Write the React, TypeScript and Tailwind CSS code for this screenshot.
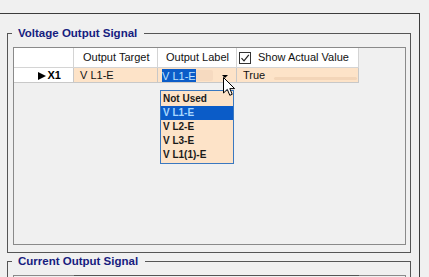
import React from 'react';

const PEACH = 'bg-[#fde3c8]';

const LIST_ITEMS = ['Not Used', 'V L1-E', 'V L2-E', 'V L3-E', 'V L1(1)-E'];

function GroupBox({ title, className, children }: { title: string; className?: string; children: React.ReactNode }) {
  return (
    <div className={`relative w-[404px] border border-[#555555] ${className ?? ''}`}>
      {/* legend sits over the top border */}
      <span className="absolute left-[4px] top-[-8px] pl-[6px] pr-[7px] bg-[#f0f0f0] text-[11.5px] leading-[14px] font-bold text-[#16207f]">
        {title}
      </span>
      {children}
    </div>
  );
}

function Cursor() {
  return (
    <svg width="13" height="20" viewBox="0 0 13 20" className="block">
      <path
        d="M0.5 0.5 L0.5 16 L4.3 12.4 L6.8 18.3 L9.2 17.3 L6.8 11.6 L11.6 11.6 Z"
        fill="#ffffff"
        stroke="#000000"
        strokeWidth="1"
        strokeLinejoin="round"
      />
    </svg>
  );
}

export default function App() {
  return (
    <div className="w-[429px] h-[277px] overflow-hidden bg-[#f0f0f0] font-['Liberation_Sans',Arial,sans-serif] text-[11px] text-[#111]">
      <div className="pt-[13px]">
        <div className="w-[420px] h-[264px] border-t border-r border-[#3c3c3c] pt-[19px] pl-[7px]">
          <GroupBox title="Voltage Output Signal" className="h-[220px]">
            <div className="relative mt-[13px] ml-[5px] w-[393px] h-[198px] border border-[#8a8a8a]">
              {/* header row */}
              <div className="flex h-[20px]">
                <div className="w-[60px] bg-white border-r border-b border-[#d4d4d4]" />
                <div className="w-[84px] bg-white border-r border-b border-[#d4d4d4] flex items-center pl-[9px]">
                  Output Target
                </div>
                <div className="w-[79px] bg-white border-r border-b border-[#d4d4d4] flex items-center pl-[8px]">
                  Output Label
                </div>
                <div className="w-[122px] bg-white border-r border-b border-[#d4d4d4] flex items-center pl-[2px]">
                  <span className="w-[12px] h-[12px] border border-[#333] bg-white flex items-center justify-center">
                    <svg width="10" height="10" viewBox="0 0 10 10">
                      <path d="M1.5 5.2 L4 7.8 L8.8 1.8" fill="none" stroke="#222" strokeWidth="1.2" />
                    </svg>
                  </span>
                  <span className="ml-[7px]">Show Actual Value</span>
                </div>
              </div>

              {/* data row */}
              <div className="flex h-[15px]">
                <div className="w-[60px] bg-white border-r border-b border-[#c8c8c8] flex items-center justify-end pr-[12px] pt-[1px] gap-[2px]">
                  <span className="w-0 h-0 border-l-[8px] border-l-black border-y-[4px] border-y-transparent" />
                  <span className="font-bold text-black">X1</span>
                </div>
                <div className={`w-[84px] ${PEACH} border-r border-b border-[#c8c8c8] flex items-center pl-[6px] pt-[1px]`}>
                  V L1-E
                </div>
                <div className={`w-[79px] ${PEACH} border-r border-b border-[#c8c8c8] flex items-center pl-[4px]`}>
                  <span className="h-[13px] leading-[13px] bg-[#0b5cc8] text-[#bfe2ff] pt-[1px]">V L1-E</span>
                  <span className="w-[17px] h-[11px] bg-[#f6dac0] rounded-[2px]" />
                  <span className="ml-auto mr-[8px] mt-[3px] w-0 h-0 border-t-[3px] border-t-black border-x-[3px] border-x-transparent" />
                </div>
                <div className={`w-[122px] ${PEACH} border-r border-b border-[#c8c8c8] flex items-center pl-[6px] pt-[1px]`}>
                  <span>True</span>
                  <span className="ml-[9px] mr-[1px] flex-1 h-[3px] mt-[6px] rounded-full bg-[#f3d5b8]" />
                </div>
              </div>

              {/* open dropdown list */}
              <div className="absolute left-[146px] top-[42px] w-[74px] border border-[#3a78c0] bg-[#fde3c8] pt-[1px] pb-[1px]">
                {LIST_ITEMS.map((item, i) => (
                  <div
                    key={item}
                    className={`h-[14px] leading-[14px] pl-[2px] text-[10px] font-bold ${
                      i === 1 ? 'bg-[#0b5cc8] text-[#a9d8ff]' : 'text-[#1a1a1a]'
                    }`}
                  >
                    {item}
                  </div>
                ))}
              </div>

              {/* mouse pointer */}
              <div className="absolute left-[209px] top-[29px]">
                <Cursor />
              </div>
            </div>
          </GroupBox>

          <GroupBox title="Current Output Signal" className="mt-[8px] h-[60px]">
            <div className="mt-[13px] ml-[5px] w-[393px] h-[40px] border-l border-r border-[#8a8a8a]">
              <div className="flex h-[1px]">
                <div className="w-[60px] bg-[#8a8a8a]" />
                <div className="w-[285px] bg-[#555555]" />
                <div className="flex-1 bg-[#8a8a8a]" />
              </div>
            </div>
          </GroupBox>
        </div>
      </div>
    </div>
  );
}
